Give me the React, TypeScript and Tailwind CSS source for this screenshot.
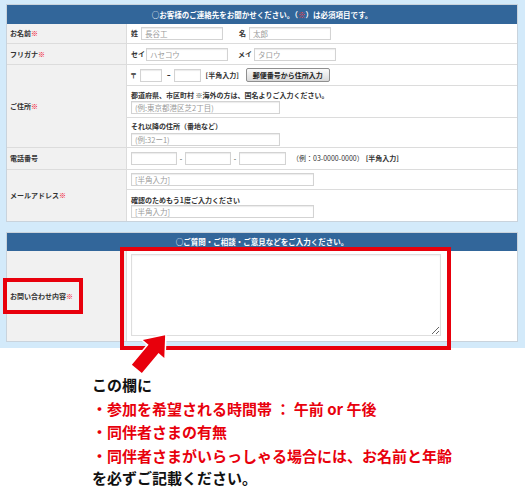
import React from "react";

const inputCls =
  "h-[13px] border border-[#d3d3d3] bg-white px-[3px] text-[7.5px] font-normal text-[#333] shadow-[inset_0_1px_1px_rgba(0,0,0,0.08)] outline-none placeholder:text-[#9a9a9a]";

function Req() {
  return <span className="font-black text-[#f00010]">※</span>;
}

function Label({ children }: { children: React.ReactNode }) {
  return (
    <div className="flex items-center border-r border-[#dcdcdc] bg-[#f1f1f1] pl-[3px] text-[7px] font-bold text-[#333]">
      {children}
    </div>
  );
}

export default function App() {
  return (
    <div className="relative h-[488px] w-[525px] overflow-hidden bg-white font-['Noto_Sans_CJK_JP',sans-serif]">
      <div className="bg-[#d3eafa] pb-[6px] pl-[6px] pr-[7px] pt-[4px]">
        {/* Contact details */}
        <div className="border border-[#c9d3dc] bg-white">
          <div className="flex h-[19px] items-center justify-center bg-[#32669a] text-[7.5px] font-bold text-white">
            ○お客様のご連絡先をお聞かせください。（<span className="text-[#ff3b3b]">※</span>）は必須項目です。
          </div>

          <div className="grid h-[20px] grid-cols-[120px_1fr] border-b border-[#dcdcdc]">
            <Label>
              お名前<Req />
            </Label>
            <div className="flex items-center pl-[4px] text-[7px] font-bold text-[#333]">
              <span>姓</span>
              <input className={`${inputCls} ml-[3px] w-[82px]`} placeholder="長谷工" />
              <span className="ml-[16px]">名</span>
              <input className={`${inputCls} ml-[3px] w-[82px]`} placeholder="太郎" />
            </div>
          </div>

          <div className="grid h-[21px] grid-cols-[120px_1fr] border-b border-[#dcdcdc]">
            <Label>
              フリガナ<Req />
            </Label>
            <div className="flex items-center pl-[4px] text-[7px] font-bold text-[#333]">
              <span>セイ</span>
              <input className={`${inputCls} ml-[1px] w-[82px]`} placeholder="ハセコウ" />
              <span className="ml-[10px]">メイ</span>
              <input className={`${inputCls} ml-[2px] w-[82px]`} placeholder="タロウ" />
            </div>
          </div>

          <div className="grid h-[83px] grid-cols-[120px_1fr] border-b border-[#dcdcdc]">
            <Label>
              ご住所<Req />
            </Label>
            <div className="flex flex-col text-[7px] font-bold text-[#333]">
              <div className="flex h-[21px] items-center border-b border-[#dcdcdc] pl-[3px]">
                <span>〒</span>
                <input className={`${inputCls} ml-[3px] w-[22px]`} />
                <span className="ml-[5px]">ｰ</span>
                <input className={`${inputCls} ml-[3px] w-[27px]`} />
                <span className="ml-[5px]">[半角入力]</span>
                <button className="ml-[7px] h-[14px] w-[84px] rounded-[2px] border border-[#8f8f8f] bg-gradient-to-b from-[#fbfbfb] to-[#d9d9d9] text-[7px] font-bold leading-none text-[#222]">
                  郵便番号から住所入力
                </button>
              </div>
              <div className="flex h-[32px] flex-col border-b border-[#dcdcdc] pl-[4px] pt-[5px]">
                <span className="leading-[8px]">
                  都道府県、市区町村 ※海外の方は、国名よりご入力ください。
                </span>
                <input className={`${inputCls} mt-[2px] w-[149px]`} placeholder="(例:東京都港区芝2丁目)" />
              </div>
              <div className="flex flex-col pl-[4px] pt-[4px]">
                <span className="leading-[8px]">それ以降の住所（番地など）</span>
                <input className={`${inputCls} mt-[3px] w-[149px]`} placeholder="(例:32ー1)" />
              </div>
            </div>
          </div>

          <div className="grid h-[22px] grid-cols-[120px_1fr] border-b border-[#dcdcdc]">
            <Label>電話番号</Label>
            <div className="flex items-center pl-[4px] text-[7px] text-[#333]">
              <input className={`${inputCls} w-[46px]`} />
              <span className="mx-[2px] w-[4px] text-center">-</span>
              <input className={`${inputCls} w-[46px]`} />
              <span className="mx-[2px] w-[4px] text-center">-</span>
              <input className={`${inputCls} w-[47px]`} />
              <span className="ml-[6px]">（例：03-0000-0000）</span>
              <span className="ml-[2px] font-bold">[半角入力]</span>
            </div>
          </div>

          <div className="grid h-[51px] grid-cols-[120px_1fr]">
            <Label>
              メールアドレス<Req />
            </Label>
            <div className="flex flex-col text-[7px] font-bold text-[#333]">
              <div className="flex h-[20px] items-center border-b border-[#dcdcdc] pl-[4px]">
                <input className={`${inputCls} w-[183px]`} placeholder="[半角入力]" />
              </div>
              <div className="flex flex-col pl-[4px] pt-[6px]">
                <span className="leading-[8px]">確認のためもう1度ご入力ください</span>
                <input className={`${inputCls} mt-[1px] w-[183px]`} placeholder="[半角入力]" />
              </div>
            </div>
          </div>
        </div>

        {/* Inquiry */}
        <div className="mt-[10px] border border-[#c9d3dc] bg-white">
          <div className="flex h-[18px] items-center justify-center bg-[#32669a] text-[7.5px] font-bold text-white">
            ○ご質問・ご相談・ご意見などをご入力ください。
          </div>
          <div className="grid h-[90px] grid-cols-[120px_1fr]">
            <Label>
              お問い合わせ内容<Req />
            </Label>
            <div className="pl-[4px] pt-[3px]">
              <textarea className="h-[82px] w-[310px] border border-[#dedede] bg-white shadow-[inset_0_1px_2px_rgba(0,0,0,0.06)] outline-none" />
            </div>
          </div>
        </div>
      </div>

      {/* Notes */}
      <div className="mt-[25px] pl-[92px] text-[15px] font-bold leading-[23.5px] text-[#111]">
        <p>この欄に</p>
        <p className="text-[#e8000c]">・参加を希望される時間帯 ： 午前 or 午後</p>
        <p className="text-[#e8000c]">・同伴者さまの有無</p>
        <p className="text-[#e8000c]">・同伴者さまがいらっしゃる場合には、お名前と年齢</p>
        <p className="mt-[4px] leading-[14px]">を必ずご記載ください。</p>
      </div>

      {/* Annotations */}
      <div className="absolute left-[3px] top-[278px] h-[36px] w-[80px] border-[4px] border-[#e8000c]" />
      <div className="absolute left-[120px] top-[247px] h-[103px] w-[331px] border-[4px] border-[#e8000c]" />
      <svg
        className="absolute left-[133.5px] top-[326.5px] h-[50px] w-[34px] rotate-[40deg]"
        viewBox="-3 -3 34 50"
      >
        <polygon
          points="14,0 28,18 20.5,18 20.5,44 7.5,44 7.5,18 0,18"
          fill="#e8000c"
          stroke="#fff"
          strokeWidth="3"
          strokeLinejoin="round"
          paintOrder="stroke"
        />
      </svg>
    </div>
  );
}
